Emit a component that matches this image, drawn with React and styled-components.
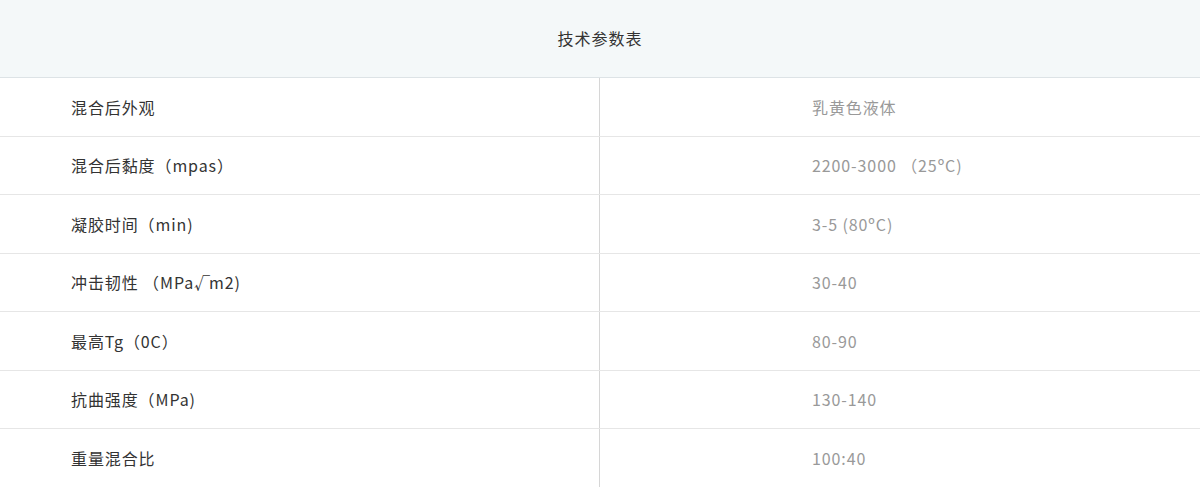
import React from 'react'
import styled, { createGlobalStyle } from 'styled-components';

const Global = createGlobalStyle`
  body {
    margin: 0;
    background: #fff;
    font-family: "Noto Sans CJK SC", "Noto Sans", sans-serif;
  }
`;

const Table = styled.div`
  width: 1200px;
  display: flex;
  flex-direction: column;
`;

const Title = styled.div`
  height: 78px;
  box-sizing: border-box;
  padding-bottom: 2px;
  display: flex;
  align-items: center;
  justify-content: center;
  background-color: #f4f8f9;
  border-bottom: 1px solid #dde3e6;
  color: #333;
  font-size: 16px;
  letter-spacing: 1px;
`;

const Row = styled.div`
  display: grid;
  grid-template-columns: 600px 1fr;
  height: 58.5px;
  box-sizing: border-box;
  border-bottom: ${({ last }) => (last ? 'none' : '1px solid #e6e6e6')};
`;

const Cell = styled.div`
  display: flex;
  align-items: center;
  box-sizing: border-box;
  padding-left: ${({ value }) => (value ? '212px' : '71px')};
  border-right: ${({ value }) => (value ? 'none' : '1px solid #d6d6d6')};
  color: ${({ value }) => (value ? '#999' : '#333')};
  font-size: 16px;
  letter-spacing: 0.9px;
  white-space: pre;
`;

const Root = styled.span`
  letter-spacing: -1px;
`;

const rows = [
  ['混合后外观', '乳黄色液体'],
  ['混合后黏度（mpas）', '2200-3000 （25ºC)'],
  ['凝胶时间（min)', '3-5 (80ºC)'],
  ['冲击韧性 （MPa', '30-40', true],
  ['最高Tg（0C）', '80-90'],
  ['抗曲强度（MPa)', '130-140'],
  ['重量混合比', '100:40'],
];

export default function App() {
  return (
    <>
      <Global />
      <Table>
        <Title>技术参数表</Title>
        {rows.map(([name, val, root], i) => (
          <Row key={name} last={i === rows.length - 1}>
            <Cell>
              {name}
              {root && <><Root>√</Root>m2)</>}
            </Cell>
            <Cell value>{val}</Cell>
          </Row>
        ))}
      </Table>
    </>
  )
}
